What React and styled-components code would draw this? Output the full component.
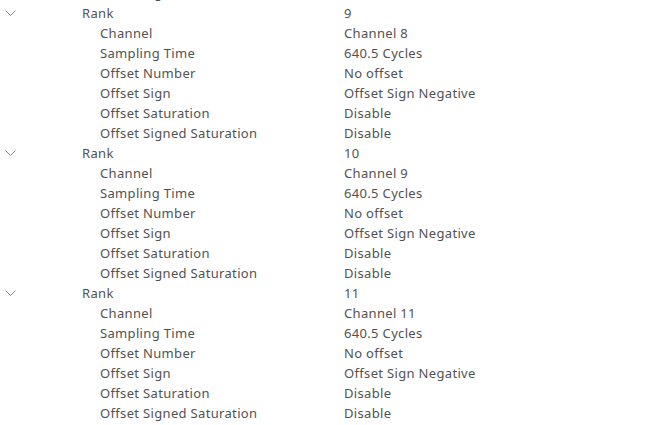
import React from 'react'
import styled, { createGlobalStyle } from 'styled-components'

const GlobalStyle = createGlobalStyle`
  html, body {
    margin: 0;
    padding: 0;
    background: #fff;
  }
  body {
    font-family: "Noto Sans", "Open Sans", sans-serif;
    font-size: 13px;
    letter-spacing: 0.33px;
    color: #525252;
    overflow: hidden;
  }
`

const ranks = [
  { rank: 8, channel: 'Channel 7', collapsedTop: true },
  { rank: 9, channel: 'Channel 8' },
  { rank: 10, channel: 'Channel 9' },
  { rank: 11, channel: 'Channel 11' },
]

const fields = (channel) => [
  ['Channel', channel],
  ['Sampling Time', '640.5 Cycles'],
  ['Offset Number', 'No offset'],
  ['Offset Sign', 'Offset Sign Negative'],
  ['Offset Saturation', 'Disable'],
  ['Offset Signed Saturation', 'Disable'],
]

const Chevron = () => (
  <svg width="11" height="6" viewBox="0 0 11 6">
    <path d="M0.5 0.5 L5.5 5.5 L10.5 0.5" fill="none" stroke="#8a8a8a" strokeWidth="1" />
  </svg>
)

export default function App() {
  return (
    <>
      <GlobalStyle />
      <Viewport>
        <Tree>
          {ranks.map((r) =>
            r.collapsedTop ? (
              <Row key={r.rank} depth={2}>
                <Label depth={2}>Offset Signed Saturation</Label>
                <Value>Disable</Value>
              </Row>
            ) : (
              <React.Fragment key={r.rank}>
                <Row depth={1}>
                  <Toggle><Chevron /></Toggle>
                  <Label depth={1}>Rank</Label>
                  <Value>{r.rank}</Value>
                </Row>
                {fields(r.channel).map(([k, v]) => (
                  <Row key={k} depth={2}>
                    <Label depth={2}>{k}</Label>
                    <Value>{v}</Value>
                  </Row>
                ))}
              </React.Fragment>
            )
          )}
        </Tree>
      </Viewport>
    </>
  )
}

const Viewport = styled.div`
  width: 663px;
  height: 425px;
  overflow: hidden;
`
const Tree = styled.div`
  display: flex;
  flex-direction: column;
  margin-top: -17px;
`
const Row = styled.div`
  display: flex;
  align-items: center;
  height: 20px;
  position: relative;
  white-space: nowrap;
`
const Toggle = styled.span`
  position: absolute;
  left: 5px;
  top: 7px;
  display: flex;
`
const Label = styled.span`
  width: ${({ depth }) => (depth === 1 ? 262 : 244)}px;
  padding-left: ${({ depth }) => (depth === 1 ? 82 : 100)}px;
  flex-shrink: 0;
`
const Value = styled.span`
  flex: 1;
`
